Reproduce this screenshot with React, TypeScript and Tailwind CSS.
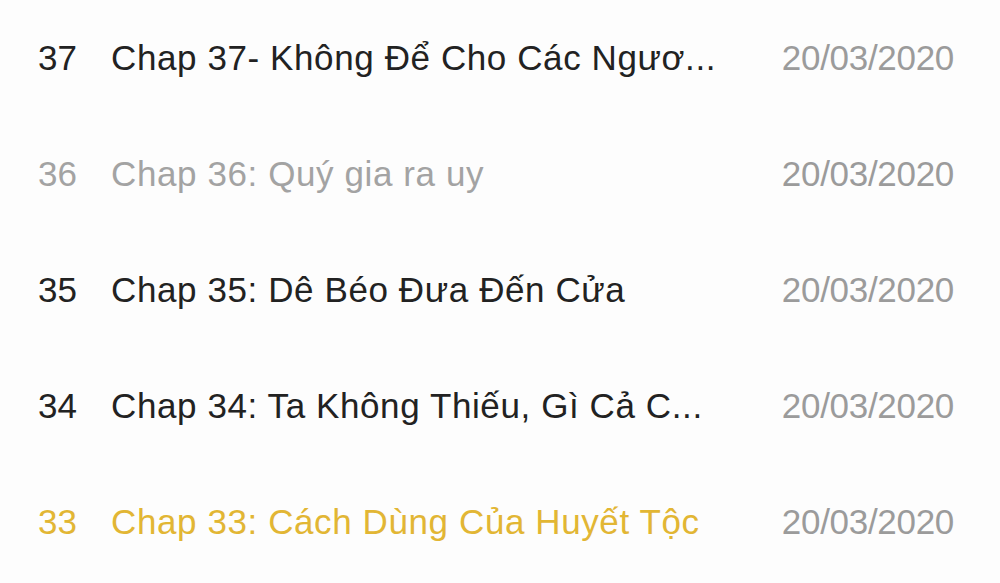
import React from "react";

type Chapter = {
  no: number;
  title: string;
  date: string;
  state: "default" | "read" | "current";
};

const chapters: Chapter[] = [
  { no: 37, title: "Chap 37- Không Để Cho Các Ngươ...", date: "20/03/2020", state: "default" },
  { no: 36, title: "Chap 36: Quý gia ra uy", date: "20/03/2020", state: "read" },
  { no: 35, title: "Chap 35: Dê Béo Đưa Đến Cửa", date: "20/03/2020", state: "default" },
  { no: 34, title: "Chap 34: Ta Không Thiếu, Gì Cả C...", date: "20/03/2020", state: "default" },
  { no: 33, title: "Chap 33: Cách Dùng Của Huyết Tộc", date: "20/03/2020", state: "current" },
];

const textColor = (state: Chapter["state"]) => {
  switch (state) {
    case "read":
      return "text-[#a3a3a3]";
    case "current":
      return "text-[#e2b634]";
    default:
      return "text-[#222222]";
  }
};

export default function App() {
  return (
    <main className="w-[1000px] h-[583px] bg-[#fdfdfd] overflow-hidden font-['Liberation_Sans','Inter',sans-serif]">
      <ul>
        {chapters.map((ch) => (
          <li key={ch.no} className="h-[116px] flex items-center pl-[38px] pr-[46px] pb-[2px] text-[35px] leading-none">
            <span className={`w-[73px] shrink-0 ${textColor(ch.state)}`}>{ch.no}</span>
            <span className={`flex-1 whitespace-nowrap tracking-[0.6px] ${textColor(ch.state)}`}>{ch.title}</span>
            <span className="text-[#9b9b9b] whitespace-nowrap tracking-[-0.3px]">{ch.date}</span>
          </li>
        ))}
      </ul>
    </main>
  );
}
